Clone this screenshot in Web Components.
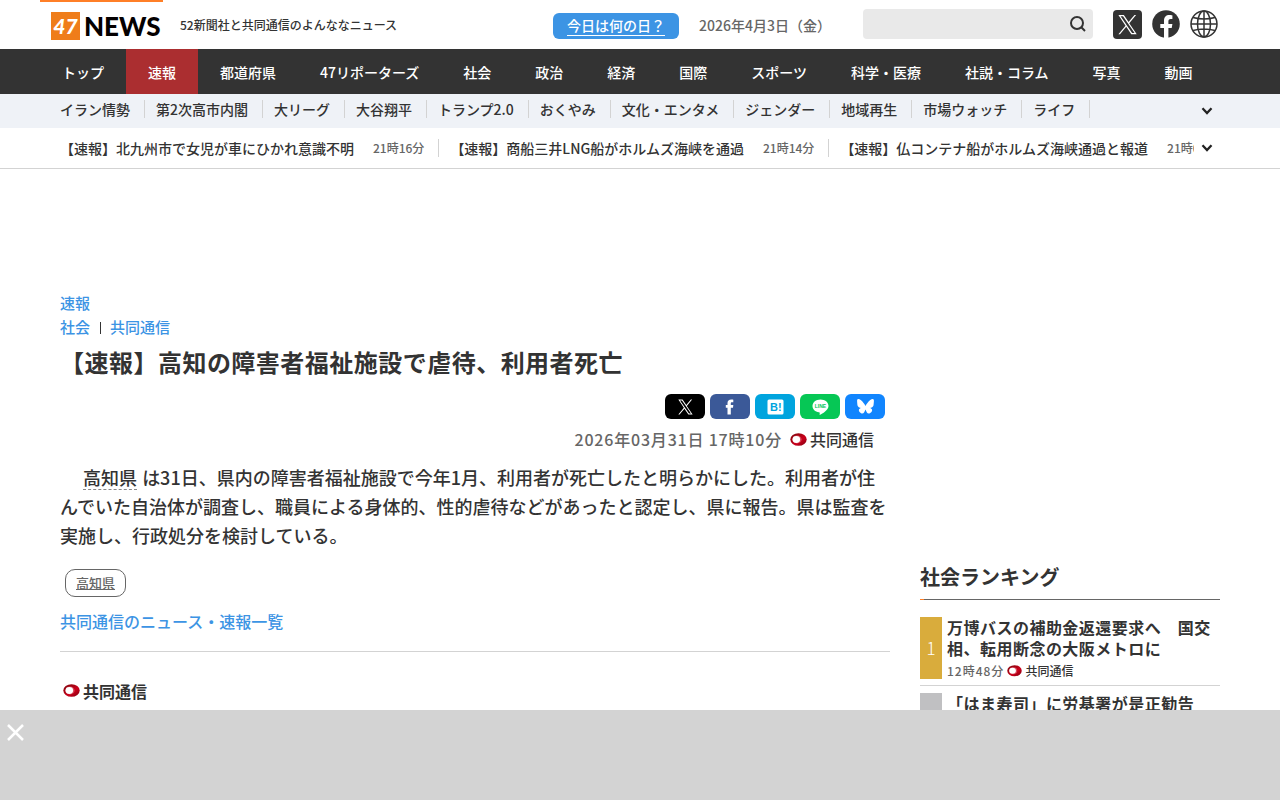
<!DOCTYPE html>
<html lang="ja">
<head>
<meta charset="utf-8">
<meta name="viewport" content="width=device-width, initial-scale=1">
<title>【速報】高知の障害者福祉施設で虐待、利用者死亡</title>
<style>
  html { --ink: #333; --sub: #666; --line: #d3d3d3; --link: #3c94e4; --heading-tracking: 0.02em; --date-tracking: 0.05em; }
  body { margin: 0; background: #fff; color: var(--ink); font-family: "Noto Sans CJK JP", "Noto Sans", sans-serif; font-weight: 500; font-size: 14px; line-height: 20px; }
</style>
</head>
<body>
<news-page></news-page>
<script>
const define = (name, html) => {
  const template = document.createElement('template');
  template.innerHTML = html;
  customElements.define(name, class extends HTMLElement {
    constructor() {
      super();
      this.attachShadow({ mode: 'open' }).append(template.content.cloneNode(true));
    }
  });
};

define('kyodo-source', `
<style>
  :host { display: inline-flex; align-items: center; gap: 3px; white-space: nowrap; }
  svg { display: block; flex: none; width: var(--mark-width, 17px); height: auto; }
</style>
<svg viewBox="0 0 17 13" aria-hidden="true">
  <defs><linearGradient id="g" x1="0" y1="0" x2="1" y2="1"><stop offset="0" stop-color="#7d0a12"/><stop offset=".3" stop-color="#a00412"/><stop offset=".6" stop-color="#cc001c"/><stop offset="1" stop-color="#7a0010"/></linearGradient></defs>
  <ellipse cx="8.5" cy="6.5" rx="8.2" ry="6.300" fill="url(#g)"/>
  <ellipse cx="7" cy="6.500" rx="4.600" ry="3.900" fill="#d8485a"/>
  <ellipse cx="6.300" cy="6.500" rx="3.800" ry="3.400" fill="#fff"/>
</svg><slot></slot>`);

define('site-logo', `
<style>
  :host { display: block; align-self: stretch; flex: none; width: 123px; border-top: 2px solid #ff7f27; box-sizing: border-box; }
  a { display: flex; align-items: center; gap: 4px; padding: 10px 0 0 11px; color: #040000; text-decoration: none; font-family: Lato, sans-serif; font-weight: 900; line-height: 28px; font-size: 26px; }
  .num { flex: none; width: 29px; text-align: center; background: #ef7d1a; color: #fff; font-size: 21px; font-style: italic; }
</style>
<a href="#"><span class="num">47</span><span>NEWS</span></a>`);

define('site-header', `
<style>
  :host { display: block; }
  .bar { max-width: 1200px; height: 49px; margin: 0 auto; display: flex; align-items: center; }
  .tag { margin: 0 auto 0 17px; font-size: 12px; }
  .today { background: var(--link); color: #fff; border-radius: 6px; text-decoration: none; padding: 3px 14px; height: 20px; margin-top: 3px; }
  .today span { display: block; border-bottom: 1px solid #fff; line-height: 19px; }
  time { color: var(--sub); margin: 0 32px 0 20px; }
  form { display: flex; width: 230px; height: 30px; margin-bottom: 1px; background: #e9e9e9; border-radius: 4px; }
  input { flex: 1; min-width: 0; border: 0; background: none; padding: 0 8px; font: inherit; outline: 0; }
  button { border: 0; background: none; padding: 0; width: 30px; display: grid; place-items: center; }
  nav { display: flex; gap: 10px; margin: 0 22px 0 20px; }
  nav a, svg { display: block; }
</style>
<header class="bar">
  <site-logo></site-logo>
  <p class="tag">52新聞社と共同通信のよんななニュース</p>
  <a class="today" href="#"><span>今日は何の日？</span></a>
  <time datetime="2026-04-03">2026年4月3日（金）</time>
  <form role="search"><input type="search" aria-label="記事を検索"><button type="button" aria-label="検索">
    <svg width="18" height="18" viewBox="0 0 18 18" fill="none" stroke="#333" stroke-width="2"><circle cx="8" cy="8" r="6"/><path d="M12.3 12.3L16 16"/></svg></button></form>
  <nav aria-label="SNS">
    <a href="#" aria-label="X"><svg width="29" height="29" viewBox="0 0 29 29"><rect width="29" height="29" rx="4" fill="#333"/><g transform="translate(5 5) scale(.8)"><path fill="#fff" d="M14.1 10.2 22.6 0h-2l-7.4 8.800L7.300 0H.5l8.900 13.300L.5 24h2l7.800-9.300L16.600 24h6.800zM3.200 1.600h3.100l14.400 20.900h-3.100z"/></g></svg></a>
    <a href="#" aria-label="Facebook"><svg width="28" height="28" viewBox="0 0 28 28"><circle cx="14" cy="14" r="13.800" fill="#333"/><path fill="#fff" d="M12 28V18H8.300v-4H12v-3.200c0-3.700 2.100-5.700 5.400-5.700 1.600 0 3 .3 3 .3v3.500h-1.700c-1.800 0-2.300 1.100-2.300 2.200V14h4l-.7 4h-3.300v10z"/></svg></a>
    <a href="#" aria-label="Language"><svg width="28" height="28" viewBox="0 0 28 28" fill="none" stroke="#333" stroke-width="1.500"><circle cx="14" cy="14" r="13"/><ellipse cx="14" cy="14" rx="6.500" ry="13"/><path d="M14 1v26M1 14h26M3 7.500q11 3 22 0M3 20.500q11-3 22 0"/></svg></a>
  </nav>
</header>`);

define('global-nav', `
<style>
  :host { display: block; background: #333; }
  nav { max-width: 1200px; margin: 0 auto; display: flex; }
  ::slotted(a) { color: #fff; text-decoration: none; padding: 2px 22px 0; line-height: 43px; white-space: nowrap; }
  ::slotted(a[aria-current]) { background: #ab2e30; }
</style>
<nav aria-label="カテゴリー"><slot></slot></nav>`);

define('chevron-button', `
<style>
  :host { display: block; flex: none; }
  button { display: grid; place-items: center; width: 26px; height: 20px; padding: 0; border: 0; background: none; }
</style>
<button type="button" aria-label="もっと見る"><svg width="12" height="8" viewBox="0 0 12 8" fill="none" stroke="#222" stroke-width="2.300"><path d="M1.500 1.300L6 6l4.500-4.700"/></svg></button>`);

define('topic-nav', `
<style>
  :host { display: block; background: #eff2f7; }
  nav { max-width: 1160px; margin: 0 auto; height: 34px; display: flex; align-items: center; justify-content: space-between; }
  .list { display: flex; gap: 11px; padding-bottom: 4px; }
  ::slotted(a) { color: var(--ink); text-decoration: none; padding-right: 14px; border-right: 1px solid var(--line); line-height: 18px; white-space: nowrap; }
</style>
<nav aria-label="注目ワード"><div class="list"><slot></slot></div><chevron-button></chevron-button></nav>`);

define('ticker-item', `
<style>
  :host { display: block; flex: none; line-height: 18px; border-right: 1px solid var(--line); padding-right: 14px; }
  a { display: flex; gap: 19px; color: inherit; text-decoration: none; white-space: nowrap; }
  .time { font-size: 12px; color: var(--sub); }
</style>
<a href="#"><slot></slot><span class="time"><slot name="time"></slot></span></a>`);

define('news-ticker', `
<style>
  :host { display: block; border-bottom: 1px solid var(--line); }
  .row { max-width: 1160px; height: 40px; margin: 0 auto; display: flex; align-items: center; }
  .items { flex: 1; min-width: 0; overflow: hidden; display: flex; gap: 11px; }
</style>
<div class="row"><div class="items"><slot></slot></div><chevron-button></chevron-button></div>`);

define('share-list', `
<style>
  :host { display: flex; justify-content: flex-end; gap: 5px; padding-right: 5px; }
  a { width: 40px; height: 25px; border-radius: 6px; display: grid; place-items: center; }
  svg { display: block; }
  text { font-family: "Liberation Sans", sans-serif; font-weight: 700; }
</style>
<a href="#" aria-label="Xでシェア" style="background:#000"><svg width="15" height="16" viewBox="0 0 24 24"><path fill="#fff" d="M14.100 10.200 22.600 0h-2l-7.400 8.800L7.300 0H.5l8.900 13.300L.5 24h2l7.800-9.300L16.600 24h6.800zM3.200 1.600h3.100l14.400 20.900h-3.100z"/></svg></a>
<a href="#" aria-label="Facebookでシェア" style="background:#3b5998"><svg width="10" height="16" viewBox="0 0 10 16"><path fill="#fff" d="M2.500 15.500V8.800H.8V5.900h1.700V4.100C2.500 1.700 3.900.5 6.300.5c1 0 1.700.1 2 .2v2.600H7c-1 0-1.200.5-1.200 1.200v1.400h2.500L8 8.800H5.800v6.700z"/></svg></a>
<a href="#" aria-label="はてなブックマークに追加" style="background:#00a4de"><svg width="17" height="16" viewBox="0 0 17 16"><rect x=".5" width="16" height="15" y=".5" rx="1.500" fill="#fff"/><text x="3" y="12" font-size="11" fill="#00a4de">B!</text></svg></a>
<a href="#" aria-label="LINEで送る" style="background:#06c755"><svg width="17" height="16" viewBox="0 0 17 16"><path fill="#fff" d="M8.500.5C4 .5.500 3.300.5 7c0 3.200 2.700 5.800 6.400 6.300 1.200.2.900.7.700 2.200 0 .3.100.5.600.3 2-1 8.300-4.600 8.300-8.800 0-3.700-3.500-6.500-8-6.500z"/><text x="8.500" y="8.800" text-anchor="middle" font-size="5" fill="#06c755">LINE</text></svg></a>
<a href="#" aria-label="Blueskyでシェア" style="background:#1185fe"><svg width="17" height="15" viewBox="0 0 64 57"><path fill="#fff" d="M13.900 3.800C21.200 9.300 29.100 20.500 32 26.500c2.900-6 10.800-17.200 18.100-22.700C55.400-.1 64-3.100 64 6.500c0 1.900-1.100 16.100-1.700 18.400-2.200 8-10.300 10-17.500 8.800 12.600 2.100 15.800 9.200 8.900 16.300-13.100 13.500-18.900-3.400-20.400-7.700-1.300-3.700-1.300-3.700-2.600 0C29.200 46.600 23.400 63.500 10.300 50c-6.900-7.100-3.700-14.200 8.900-16.300-7.200 1.200-15.300-.8-17.500-8.800C1.100 22.600 0 8.400 0 6.500c0-9.600 8.500-6.600 13.900-2.700z"/></svg></a>`);

define('news-article', `
<style>
  :host { display: block; color: var(--ink); }
  a { color: var(--link); text-decoration: none; }
  .cats { font-size: 15px; line-height: 24px; }
  .cats div { display: flex; align-items: center; }
  .cats i { width: 1px; height: 12px; margin: 2px 9px 0 10px; background: var(--ink); }
  h1 { margin: 3px 0 13px; font-size: 24px; line-height: 39px; font-weight: 700; letter-spacing: var(--heading-tracking); }
  .meta { display: flex; justify-content: flex-end; align-items: center; gap: 8px; padding: 8px 16px 0 0; font-size: 16px; line-height: 24px; }
  time { color: var(--sub); letter-spacing: var(--date-tracking); }
  .body { margin: 12px 0 20px; font-size: 18px; line-height: 1.6; }
  .body a { display: inline-block; line-height: 24px; margin: 0 1px; color: inherit; border-bottom: 1px dashed #888; }
  .tag { display: inline-block; margin-left: 5px; border: 1px solid var(--sub); border-radius: 10px; padding: 3px 10px; font-size: 13px; line-height: 20px; color: var(--sub); text-decoration: underline; }
  .more { display: block; margin-top: 12px; padding-bottom: 18px; border-bottom: 1px solid var(--line); font-size: 16px; line-height: 24px; }
  .source { margin: 26px 0 0 3px; font-size: 16px; line-height: 24px; font-weight: 700; }
</style>
<article>
  <div class="cats"><div><a href="#">速報</a></div><div><a href="#">社会</a><i></i><a href="#">共同通信</a></div></div>
  <h1>【速報】高知の障害者福祉施設で虐待、利用者死亡</h1>
  <share-list></share-list>
  <div class="meta"><time datetime="2026-03-31T17:10">2026年03月31日 17時10分</time><kyodo-source>共同通信</kyodo-source></div>
  <p class="body">　 <a href="#">高知県</a> <span>は31日、県内の障害者福祉施設で今年1月、利用者が死亡したと明らかにした。利用者が住んでいた自治体が調査し、職員による身体的、性的虐待などがあったと認定し、県に報告。県は監査を実施し、行政処分を検討している。</span></p>
  <a class="tag" href="#">高知県</a>
  <a class="more" href="#">共同通信のニュース・速報一覧</a>
  <div class="source"><kyodo-source>共同通信</kyodo-source></div>
</article>`);

define('rank-item', `
<style>
  :host { display: grid; grid-template-columns: 22px 1fr; gap: 5px; padding-bottom: 6px; margin-bottom: 7px; border-bottom: 1px solid var(--line); --mark-width: 15px; }
  .num { display: grid; place-items: center; background: var(--rank-color); color: #fff; font-size: 17px; font-weight: 300; }
  a { color: inherit; text-decoration: none; font-size: 16px; line-height: 21px; font-weight: 700; letter-spacing: 0.03em; display: block; }
  .meta { display: flex; align-items: center; gap: 3px; margin-top: 4px; font-size: 12px; line-height: 16px; min-height: 16px; }
  .time { color: var(--sub); letter-spacing: 1px; }
</style>
<span class="num"><slot name="rank"></slot></span>
<div><a href="#"><slot></slot></a><div class="meta"><span class="time"><slot name="time"></slot></span><slot name="source"></slot></div></div>`);

define('ranking-list', `
<style>
  :host { display: block; }
  h2 { margin: 0 0 17px; padding-bottom: 7px; font-size: 20px; line-height: 30px; font-weight: 700; border-bottom: 1px solid; border-image: linear-gradient(to right, #ff7f27 5px, #666 5px) 1; }
</style>
<h2>社会ランキング</h2><slot></slot>`);

define('bottom-banner', `
<style>
  :host { display: block; position: fixed; left: 0; right: 0; bottom: 0; height: 90px; background: #d3d3d3; }
  button { display: block; margin: 14px 0 0 7px; padding: 0; border: 0; background: none; }
  svg { display: block; }
</style>
<button type="button" aria-label="閉じる"><svg width="17" height="17" viewBox="0 0 17 17" stroke="#fff" stroke-width="2.500"><path d="M1 1l15 15M16 1L1 16"/></svg></button>`);

define('news-page', `
<style>
  :host { display: block; }
  main { max-width: 1160px; margin: 0 auto; padding: 122px 0 20px; display: grid; grid-template-columns: 1fr 300px; gap: 30px; }
  aside { padding-top: 271px; }
</style>
<site-header></site-header>
<global-nav><a href="#">トップ</a><a href="#" aria-current="page">速報</a><a href="#">都道府県</a><a href="#">47リポーターズ</a><a href="#">社会</a><a href="#">政治</a><a href="#">経済</a><a href="#">国際</a><a href="#">スポーツ</a><a href="#">科学・医療</a><a href="#">社説・コラム</a><a href="#">写真</a><a href="#">動画</a></global-nav>
<topic-nav><a href="#">イラン情勢</a><a href="#">第2次高市内閣</a><a href="#">大リーグ</a><a href="#">大谷翔平</a><a href="#">トランプ2.0</a><a href="#">おくやみ</a><a href="#">文化・エンタメ</a><a href="#">ジェンダー</a><a href="#">地域再生</a><a href="#">市場ウォッチ</a><a href="#">ライフ</a></topic-nav>
<news-ticker>
  <ticker-item>【速報】北九州市で女児が車にひかれ意識不明<span slot="time">21時16分</span></ticker-item>
  <ticker-item>【速報】商船三井LNG船がホルムズ海峡を通過<span slot="time">21時14分</span></ticker-item>
  <ticker-item>【速報】仏コンテナ船がホルムズ海峡通過と報道<span slot="time">21時09分</span></ticker-item>
</news-ticker>
<main>
  <news-article></news-article>
  <aside><ranking-list>
    <rank-item style="--rank-color:#d9ac3c"><span slot="rank">1</span>万博バスの補助金返還要求へ　国交相、転用断念の大阪メトロに<span slot="time">12時48分</span><kyodo-source slot="source">共同通信</kyodo-source></rank-item>
    <rank-item style="--rank-color:#c0c0c2">「はま寿司」に労基署が是正勧告</rank-item>
  </ranking-list></aside>
</main>
<bottom-banner></bottom-banner>`);
</script>
</body>
</html>
